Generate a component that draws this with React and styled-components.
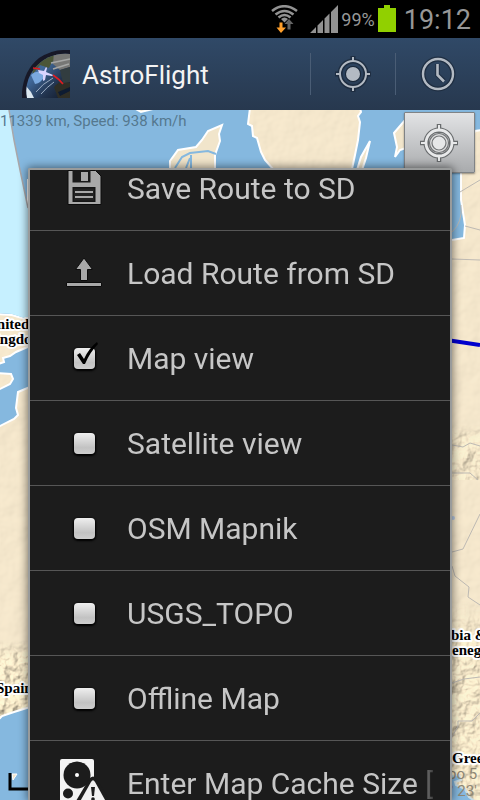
import React, { useState } from "react";
import styled, { createGlobalStyle } from "styled-components";

const GlobalStyle = createGlobalStyle`
  * {
    box-sizing: border-box;
  }
  body {
    margin: 0;
    background: #000;
    font-family: Roboto, "Noto Sans", sans-serif;
  }
`;

const Screen = styled.div`
  height: 100vh;
  display: flex;
  flex-direction: column;
  overflow: hidden;
`;

const StatusBar = styled.header`
  height: 38px;
  flex: none;
  display: flex;
  align-items: center;
  justify-content: flex-end;
  padding: 0 9px;
  background: #000;
  color: #979797;
`;

const StatusIcon = styled.svg`
  width: 28px;
  height: 28px;
  margin-right: ${(props) => props.$gap}px;
`;

const Percent = styled.span`
  padding-top: 2px;
  font-size: 18px;
  line-height: 36px;
  margin-right: 3px;
`;

const Battery = styled.svg`
  width: 18px;
  height: 28px;
  margin-right: 8px;
`;

const Clock = styled.time`
  padding-top: 2px;
  font-size: 27px;
  line-height: 36px;
`;

const ActionBar = styled.nav`
  height: 72px;
  flex: none;
  display: flex;
  align-items: center;
  padding-left: 22px;
  background: linear-gradient(#304967, #27384e);
`;

const Logo = styled.svg`
  width: 48px;
  height: 48px;
`;

const Title = styled.h1`
  flex: 1;
  margin: 0 0 0 12px;
  padding-top: 2px;
  font-size: 26px;
  font-weight: 400;
  line-height: 36px;
  color: #f3f3f3;
`;

const ActionButton = styled.button`
  width: 85px;
  height: 42px;
  display: flex;
  align-items: center;
  justify-content: center;
  padding: 0;
  background: none;
  border: none;
  border-left: 1px solid #4a5d75;

  svg {
    width: 40px;
    height: 40px;
  }
`;

const MapArea = styled.main`
  position: relative;
  flex: 1;
  min-height: 0;
  overflow: hidden;
  background: #f3e6cb;
`;

const MapDrawing = styled.svg`
  display: block;
  width: 100%;
  height: 100%;
`;

const FlightInfo = styled.p`
  position: absolute;
  top: 2px;
  left: 0;
  margin: 0;
  font-size: 15px;
  line-height: 18px;
  color: #55788f;
`;

const Readout = styled.p`
  position: absolute;
  right: 0;
  bottom: 0;
  width: 32px;
  margin: 0;
  font-size: 15px;
  line-height: 17px;
  white-space: pre;
  color: #8f8775;
`;

const LocateButton = styled.button`
  position: absolute;
  top: 2px;
  right: 5px;
  width: 71px;
  height: 61px;
  display: flex;
  align-items: center;
  justify-content: center;
  padding: 0 2px 0 0;
  border: 1px solid #808386;
  border-radius: 1px;
  background: linear-gradient(#e2e3e5, #a9abad);
  box-shadow: 0 1px 2px rgba(0, 0, 0, 0.4);

  svg {
    width: 40px;
    height: 40px;
  }
`;

const Menu = styled.section`
  position: absolute;
  top: 58px;
  right: 28px;
  bottom: 0;
  left: 28px;
  overflow: hidden;
  border: 2px solid #999b9b;
  border-bottom: none;
  border-radius: 2px 2px 0 0;
  background: #1c1c1c;
  box-shadow: 0 0 8px 1px rgba(0, 0, 0, 0.5);
`;

/* the list is scrolled a little, so its first row is cut by the frame */
const MenuList = styled.ul`
  margin: -24px 0 0;
  padding: 0;
  list-style: none;
`;

const MenuItem = styled.li`
  height: 85px;
  border-bottom: 1px solid #565656;
`;

const MenuAction = styled.button`
  width: 100%;
  height: 100%;
  display: flex;
  align-items: center;
  gap: 19px;
  padding: 0 12px 0 30px;
  border: none;
  background: none;
  font-family: inherit;
  font-size: 30px;
  line-height: 40px;
  text-align: left;
  color: #c6c6c6;
`;

const MenuIcon = styled.svg`
  width: 48px;
  height: 48px;
  flex: none;
`;

const MenuText = styled.span`
  flex: 1;
  min-width: 0;
  padding-top: 2px;
  overflow: hidden;
  white-space: nowrap;
  mask-image: linear-gradient(to left, transparent, #000 24px);
`;

const CheckCell = styled.span`
  position: relative;
  width: 48px;
  height: 48px;
  flex: none;
  display: flex;
  align-items: center;
  justify-content: center;
  padding-left: 1px;

  svg {
    position: absolute;
    inset: 0;
    pointer-events: none;
  }
`;

const Checkbox = styled.input`
  appearance: none;
  width: 21px;
  height: 21px;
  margin: 0;
  border-radius: 4px;
  background: linear-gradient(#efefef, #c2c2c2 70%, #cecece);
  box-shadow: 0 1px 2px 1px #000;
`;

const PlaceName = styled.text`
  font-family: "Liberation Serif", serif;
  font-size: 15px;
  font-weight: 700;
  fill: #000;
  stroke: #fff;
  stroke-width: 4px;
  stroke-linejoin: round;
  paint-order: stroke;
`;

const TargetIcon = () => (
  <svg viewBox="0 0 40 40" fill="none" aria-hidden="true">
    <g stroke="#1a2738" strokeWidth="5" opacity="0.7">
      <circle cx="20" cy="20" r="13" />
      <path d="M20 2v6M20 32v6M2 20h6M32 20h6" />
    </g>
    <g stroke="#b3bac3" strokeWidth="2">
      <circle cx="20" cy="20" r="13" />
      <path d="M20 3v5M20 32v5M3 20h5M32 20h5" />
    </g>
    <circle cx="20" cy="20" r="8" fill="#1a2738" />
    <circle cx="20" cy="20" r="7" fill="#b3bac3" />
  </svg>
);

const HistoryIcon = () => (
  <svg viewBox="0 0 40 40" fill="none" aria-hidden="true">
    <circle cx="20" cy="20" r="15" stroke="#1a2738" strokeWidth="5" opacity="0.7" />
    <circle cx="20" cy="20" r="15" stroke="#b3bac3" strokeWidth="2.4" />
    <path d="M19.500 10V21L26 27" stroke="#1a2738" strokeWidth="5" opacity="0.6" />
    <path d="M19.500 10V21L26 27.500" stroke="#b3bac3" strokeWidth="2.600" />
  </svg>
);

const LocateIcon = () => (
  <svg viewBox="0 0 40 40" fill="none" aria-hidden="true">
    <g stroke="#686b6d">
      <path d="M20 1v9M20 30v9M1 20h9M30 20h9" strokeWidth="4.500" />
      <circle cx="20" cy="20" r="13" strokeWidth="5" />
    </g>
    <g stroke="#e8e9ea">
      <path d="M20 2v6M20 32v6M2 20h6M32 20h6" strokeWidth="2" />
      <circle cx="20" cy="20" r="13" strokeWidth="2.800" />
    </g>
    <circle cx="20" cy="20" r="9.500" fill="#dddedf" stroke="#737577" strokeWidth="1.200" />
    <circle cx="20" cy="20" r="7" fill="#e6e7e8" stroke="#737577" strokeWidth="1.200" />
  </svg>
);

const SaveIcon = () => (
  <MenuIcon viewBox="0 0 48 48" aria-hidden="true">
    <path d="M8 6.500H35.500L41 12V40.500H8Z" fill="#a8a8a8" stroke="#0c0c0c" />
    <path d="M12.500 5.500H30.500V18.500H12.500Z" fill="#1a1a1a" />
    <path d="M21 8H28V17H21Z" fill="#a8a8a8" />
    <path d="M12.500 23H35.500V38H12.500Z" fill="#151515" />
    <path d="M14 24.500H34V36.500H14Z" fill="#222" />
    <path d="M15 28H33M15 33H33" stroke="#a8a8a8" strokeWidth="2" />
  </MenuIcon>
);

const LoadIcon = () => (
  <MenuIcon viewBox="0 0 48 48" aria-hidden="true" fill="#a8a8a8" stroke="#0c0c0c">
    <path d="M24 9L32.500 20.500H27.500V31.500H20.500V20.500H15.500Z" />
    <path d="M6.500 33.500H41.500V37.500H6.500Z" />
  </MenuIcon>
);

const DiskIcon = () => (
  <MenuIcon viewBox="0 0 48 48" aria-hidden="true">
    <rect x="0" y="0" width="34" height="48" rx="2" fill="#f4f4f4" />
    <circle cx="17" cy="16" r="13.500" fill="#1c1c1c" />
    <circle cx="17" cy="16" r="2" fill="#fff" />
    <circle cx="8" cy="34.500" r="5" fill="#1c1c1c" />
    <path d="M16 42L29 20Q33 15 37 20L52 46H16Z" fill="#1c1c1c" />
    <path d="M17 48L31 23Q33 19.500 35 23L49 48Z" fill="#f0f0f0" />
    <path d="M31 28H35L34 37H32Z" fill="#1c1c1c" />
    <circle cx="33" cy="40" r="1.800" fill="#1c1c1c" />
  </MenuIcon>
);

const WifiIcon = () => (
  <StatusIcon viewBox="0 0 28 28" $gap={11} fill="none" aria-hidden="true">
    <g stroke="#929292" strokeWidth="2.600">
      <path d="M1 6Q13 -3.500 26 6" />
      <path d="M4.500 9.500Q13.500 2.500 22.500 9.500" />
      <path d="M7.500 12.500Q13.500 7.500 19.500 12.500" />
    </g>
    <path d="M10 14Q13.500 11 17 14L13.500 17.500Z" fill="#929292" />
    <path d="M8.500 17.500H11.500V22.500H15L10 28L5.500 22.500H8.500Z" fill="#ff9f2b" />
    <path d="M16.500 24.500V19H13.500L18 14L22.500 19H19.500V24.500Z" fill="#646464" />
  </StatusIcon>
);

const SignalIcon = () => (
  <StatusIcon viewBox="0 0 28 28" $gap={3} aria-hidden="true" fill="#929292">
    <path d="M0 28L6 22V28ZM7.500 28V20.500L13 15V28ZM14.500 28V13.500L19.500 8.500V28ZM21 28V7L28 0V28Z" />
  </StatusIcon>
);

const EarthLogo = () => (
  <Logo viewBox="0 0 48 48" role="img" aria-label="AstroFlight logo">
    <defs>
      <clipPath id="earthClip">
        <path d="M5 48Q2 32 12 19Q26 2 48 4V48Z" />
      </clipPath>
      <linearGradient id="ocean" x2="1" y2="1">
        <stop offset="0" stopColor="#38506a" />
        <stop offset="0.400" stopColor="#41699a" />
        <stop offset="0.700" stopColor="#22344f" />
        <stop offset="1" stopColor="#0f1726" />
      </linearGradient>
      <filter id="soft">
        <feGaussianBlur stdDeviation="0.6" />
      </filter>
    </defs>
    <path d="M0 48V42Q2 20 17 8Q30 0 41 0H48V48Z" fill="#171827" />
    <g clipPath="url(#earthClip)">
      <rect width="48" height="48" fill="url(#ocean)" />
      <g filter="url(#soft)">
        <path d="M10 20Q18 8 33 4L40 7L30 12L27 18L18 15L11 24Z" fill="#4c5737" />
        <path d="M32 2H48V17L38 20L31 14Z" fill="#777775" />
        <path d="M29 13L48 9M31 19L47 14" stroke="#a6a7a6" strokeWidth="1.500" />
        <path d="M9 25Q16 18 23 26Q19 33 13 34Z" fill="#7aa9df" />
        <path d="M14 42Q20 34 31 28M19 44Q25 37 32 32" stroke="#9cadc2" strokeWidth="1" fill="none" />
        <path d="M4 36L9 42L12 48H4Z" fill="#dce7ef" />
        <path d="M32 37Q38 29 48 33V48H36Z" fill="#2d2f26" />
        <path d="M38 20L48 17V32L41 33Z" fill="#333c40" />
        <path d="M36 42L48 37V41L38 46Z" fill="#111b30" />
      </g>
    </g>
    <path d="M11 18L18 19M31 25Q37 29 41 34" stroke="#e01c22" strokeWidth="1.600" fill="none" />
    <path d="M16 20L22 21L24 17L25 18L24 22L31 25L30 26L24 25L23 30L21 31L21 25L17 23Z" fill="#d9d5ff" />
  </Logo>
);

const EuropeMap = () => (
  <MapDrawing viewBox="0 110 480 690" preserveAspectRatio="xMidYMin slice" aria-hidden="true">
    <defs>
      <filter id="plain" x="0" y="0" width="100%" height="100%">
        <feTurbulence type="fractalNoise" baseFrequency="0.05" numOctaves="3" seed="4" />
        <feDiffuseLighting surfaceScale="1.5" lightingColor="#fff0d4" diffuseConstant="1.08">
          <feDistantLight azimuth="225" elevation="60" />
        </feDiffuseLighting>
      </filter>
      <filter id="mountain" x="0" y="0" width="100%" height="100%">
        <feTurbulence type="fractalNoise" baseFrequency="0.07" numOctaves="4" seed="9" />
        <feDiffuseLighting surfaceScale="7" lightingColor="#fff0cd" diffuseConstant="1.14">
          <feDistantLight azimuth="225" elevation="60" />
        </feDiffuseLighting>
      </filter>
      <linearGradient id="rise" x2="0" y2="1">
        <stop offset="0" stopColor="#fff" stopOpacity="0" />
        <stop offset="0.25" stopColor="#fff" stopOpacity="0.8" />
        <stop offset="1" stopColor="#fff" stopOpacity="0.8" />
      </linearGradient>
      <mask id="hills">
        <rect x="0" y="640" width="30" height="85" fill="url(#rise)" />
        <rect x="450" y="425" width="30" height="55" fill="url(#rise)" opacity="0.6" />
        <rect x="450" y="600" width="30" height="200" fill="url(#rise)" opacity="0.8" />
      </mask>
    </defs>
    <rect y="110" width="480" height="690" fill="#f3e6cb" />
    <rect y="110" width="480" height="690" filter="url(#plain)" opacity="0.4" />
    <g mask="url(#hills)">
      <rect y="110" width="480" height="690" filter="url(#mountain)" />
    </g>

    <g fill="#85b8df" stroke="#fff" strokeWidth="2">
      <path d="M-2 108H250L248 124L252 126L253 136L257 138L261 152L265 160L273 169L352 169L355 155L358 140L360 122L358 116L361 112L360 108H482V130L475 131L470 142L463 150L461 172L461 200L465 225L464 238L452 240L440 240V180H28V320L12 315L-2 314Z" />
      <path d="M30 346L16 352L10 356L3 358L4 362L-2 364V373L11 374L13 379L10 384L-2 390V427L14 419L18 415L16 408L18 392L30 387Z" />
      <path d="M30 707L14 712L2 716L-2 720V802H30Z" />
      <path d="M450 776L459 775L461 780L455 782L456 785L465 789L469 797L476 802H450Z" stroke="#c9dbe2" />
    </g>
    <path d="M0 110H9L14 140L20 170L28 208V319L12 314L0 313Z" fill="#c6f0ff" />
    <path d="M9 110L14 140L20 170L28 208" fill="none" stroke="#aaa7a9" strokeWidth="1.500" />
    <g fill="#f1e5cb" stroke="#fff" strokeWidth="2">
      <path d="M134 108L141 112L153 109Z" />
      <path d="M170 168L170 161L178 150L196 147L202 140L208 131L222 125L219 134L220 141L215 155L215 170H172Z" />
      <path d="M357 170L361 157L370 141L366 158L362 170Z" />
      <path d="M394 133L406 119V148L400 150L395 157L397 147Z" />
      <path d="M12 774L17 774L13 780Z" strokeWidth="1" />
    </g>
    <path
      d="M175 168L182 157L190 153L208 151L216 154M186 168L190 158M191 168L191 155"
      fill="none"
      stroke="#85b8df"
      strokeWidth="2"
    />
    <g fill="none" stroke="#bdb9b3" strokeWidth="1">
      <path d="M460 192L480 180M465 226L480 230M452 259L480 260M461 205Q463 222 452 232" />
      <path d="M452 445L463 447L470 443L480 446M452 473H470L478 480" />
      <path d="M480 514L463 549L452 552M452 566L455 576L469 587L468 597L480 605" />
      <path d="M452 683L464 679L480 677M452 737L458 726L458 721H472L480 713" />
    </g>
    <circle cx="453" cy="518" r="2" fill="#b9cbe4" />
    <path d="M440 339L480 345" stroke="#0000cd" strokeWidth="4" />
    <PlaceName x="-14" y="329">United</PlaceName>
    <PlaceName x="-16" y="344">Kingdom</PlaceName>
    <PlaceName x="-4" y="693">Spain</PlaceName>
    <PlaceName x="451" y="640">bia &amp;</PlaceName>
    <PlaceName x="452" y="655">eneg</PlaceName>
    <PlaceName x="452" y="763">Greece</PlaceName>
    <path d="M10 773V789H30" fill="none" stroke="#000" strokeWidth="3" />
  </MapDrawing>
);

const actions = [
  { name: "Save Route to SD", icon: SaveIcon },
  { name: "Load Route from SD", icon: LoadIcon }
];

const layers = ["Map view", "Satellite view", "OSM Mapnik", "USGS_TOPO", "Offline Map"];

const App = () => {
  const [layer, setLayer] = useState("Map view");

  return (
    <Screen>
      <GlobalStyle />
      <StatusBar>
        <WifiIcon />
        <SignalIcon />
        <Percent>99%</Percent>
        <Battery viewBox="0 0 18 28" aria-hidden="true">
          <path d="M6 0H12V3H18V27H0V3H6Z" fill="#91d000" />
        </Battery>
        <Clock>19:12</Clock>
      </StatusBar>
      <ActionBar>
        <EarthLogo />
        <Title>AstroFlight</Title>
        <ActionButton aria-label="My location">
          <TargetIcon />
        </ActionButton>
        <ActionButton aria-label="History">
          <HistoryIcon />
        </ActionButton>
      </ActionBar>
      <MapArea>
        <EuropeMap />
        <FlightInfo>11339 km, Speed: 938 km/h</FlightInfo>
        <Readout>{"po 5\n° 23'"}</Readout>
        <LocateButton aria-label="Center map">
          <LocateIcon />
        </LocateButton>
        <Menu>
          <MenuList>
            {actions.map((item) => (
              <MenuItem key={item.name}>
                <MenuAction>
                  <item.icon />
                  <MenuText>{item.name}</MenuText>
                </MenuAction>
              </MenuItem>
            ))}
            {layers.map((name) => (
              <MenuItem key={name}>
                <MenuAction as="label">
                  <CheckCell>
                    <Checkbox type="checkbox" checked={layer === name} onChange={() => setLayer(name)} />
                    {layer === name && (
                      <svg viewBox="0 0 48 48" aria-hidden="true">
                        <path d="M17 21L20 19L24 25Q29 14 37 8L38 10Q30 18 25 30H23Z" fill="#000" />
                      </svg>
                    )}
                  </CheckCell>
                  <MenuText>{name}</MenuText>
                </MenuAction>
              </MenuItem>
            ))}
            <MenuItem>
              <MenuAction>
                <DiskIcon />
                <MenuText>Enter Map Cache Size [</MenuText>
              </MenuAction>
            </MenuItem>
          </MenuList>
        </Menu>
      </MapArea>
    </Screen>
  );
};

export default App;
